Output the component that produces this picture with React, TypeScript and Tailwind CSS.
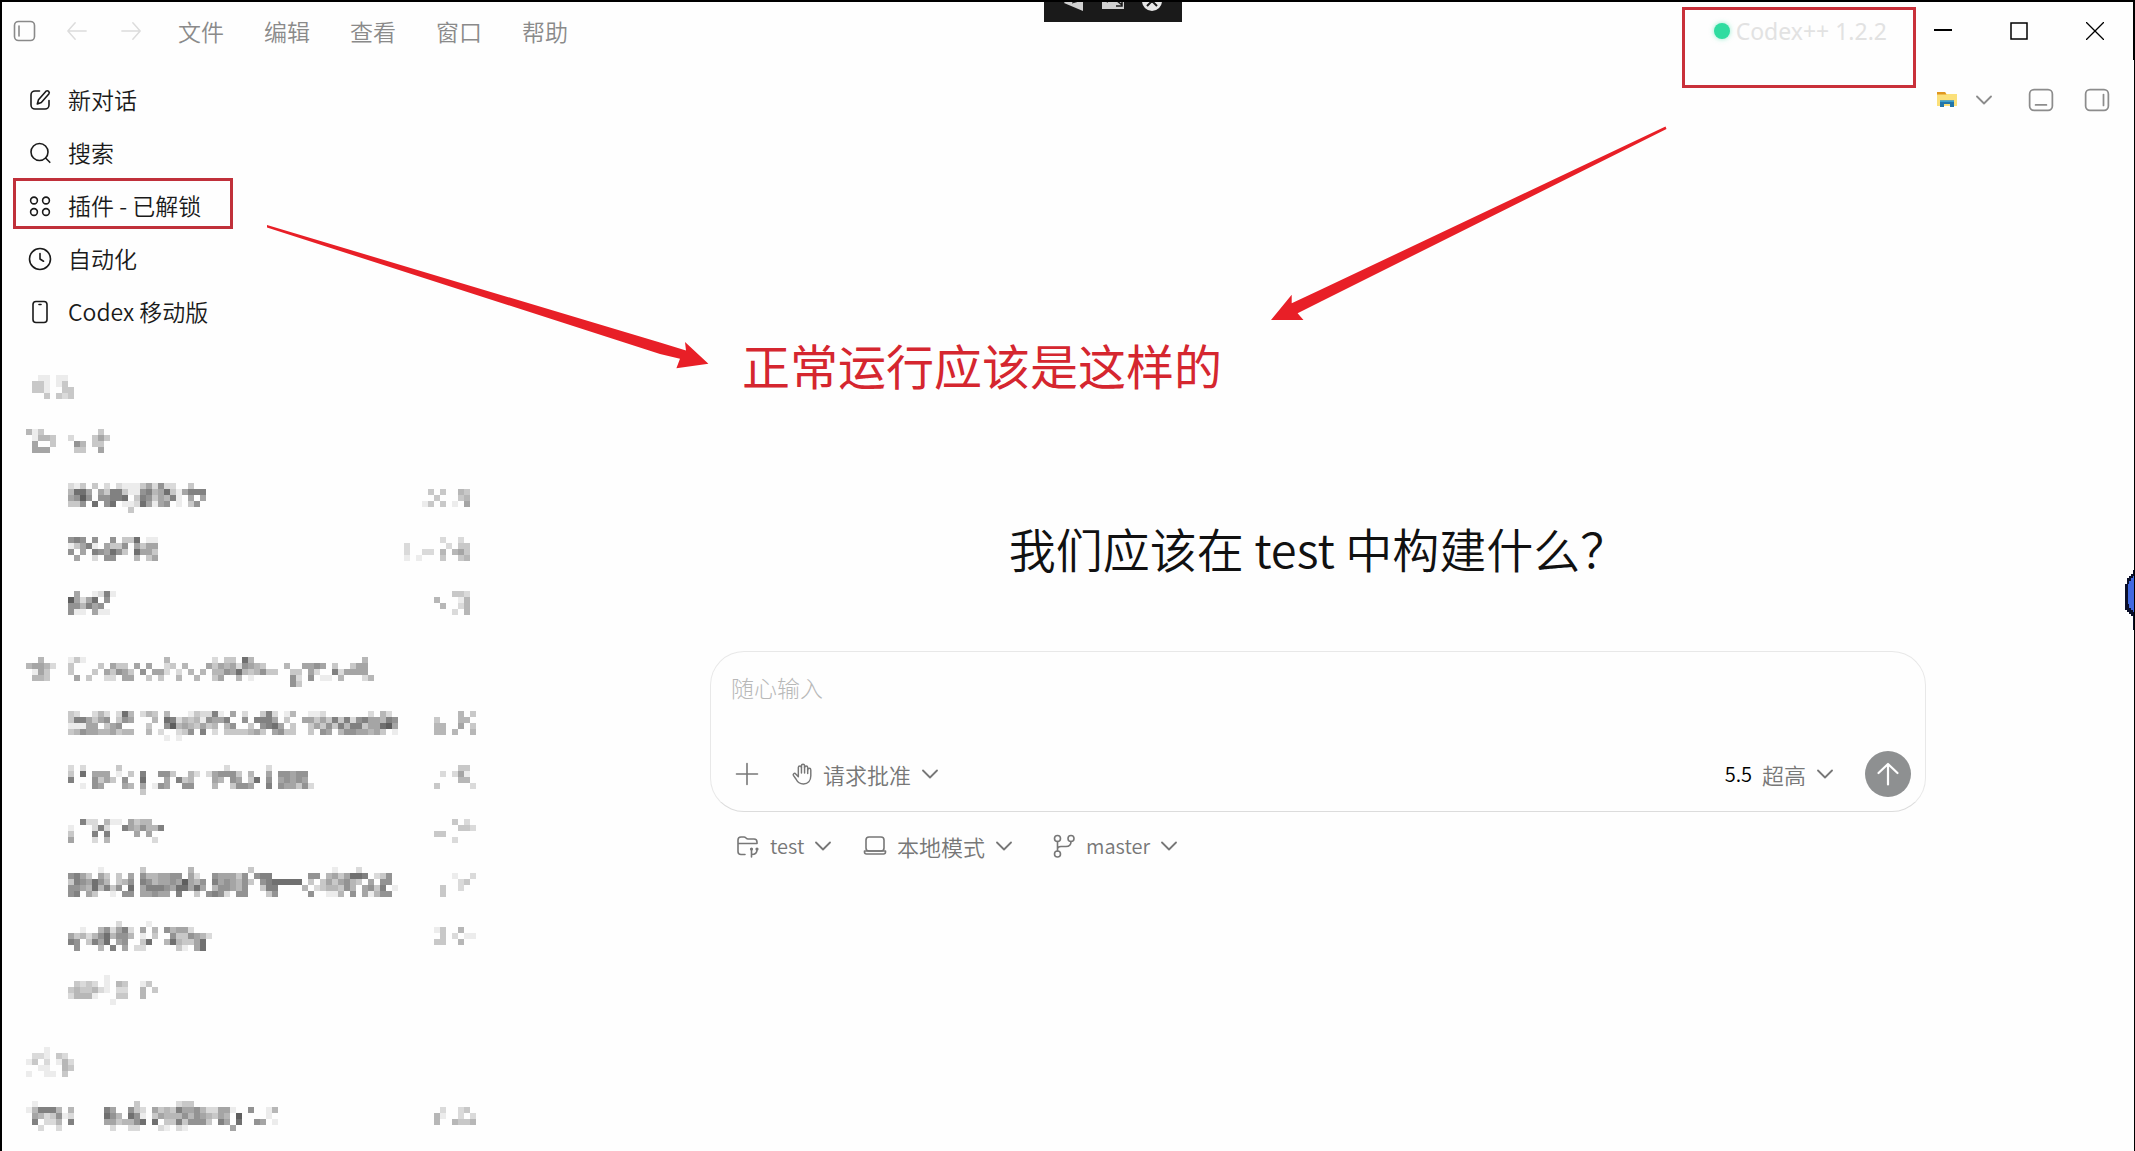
import React from 'react';

type Row = { label: string[]; time?: string[] };

const menus = ['文件', '编辑', '查看', '窗口', '帮助'];

// 모자이크 처리된 대화 목록: 한 글자 = 6px 블록, 숫자가 클수록 진함
const groups: Row[][] = [
    [
        { label: ['', '..11.11', '.331.13', '.331..33', '...3.323'] },
        { label: ['', '413.........3', '.1443..2...353', '.5..3...64.33', '.555....33..5'] },
        {
            label: ['', '.......213.3.2.2111352622..3', '.......4885.537731167458315777', '.......5696.66778.37635471.5.5', '.......336.8.68.11285156.1.36', '.................3'],
            time: ['', '', '....3.3..43', '.....3...34', '...13.3.1.5'],
        },
        {
            label: ['', '.......676.6..6.338.11', '.......13571.5336.5355', '.......6.5.765863.8553', '........5..2.66...4.35'],
            time: ['', '......2..2', '2......2.33', '2..22.4.453', '1.1...3..34'],
        },
        {
            label: ['', '........5..1271', '.......9525806', '.......6647560', '.......611.511'],
            time: ['', '........332', '.....4...14', '......4..24', '........2.4'],
        },
    ],
    [
        {
            label: [
                '',
                '..4....131.............4.......2.33.84..................4',
                '45542..3....3.533.5.5..23.4...5354526543...4..5565.3..355',
                '.153...3...3.53653.6.552.2.4.4.44658434633..33.52..725555',
                '.443....5.3..22.55..3.3..4..4..35..4.1......62.6.11.4...24',
                '............................................63',
            ],
        },
        {
            label: [
                '',
                '.......32..242.284.243.4...13227105.2..372.14..112.......2.42.',
                '.......3775356.365...4.87243416557..6.7775.3..5535373726755476',
                '.......11155.356....3..694543534046..3.6785.3..353637477355895',
                '.......34655445344..4.2..236.7.2.3333453.5633..3.65.46655453.1',
                '.......................1.1',
            ],
            time: ['', '.........4.3', '.....3...44', '.....44..5.3', '.....44.4..4'],
        },
        {
            label: [
                '',
                '.......2.2.....3.................2......2',
                '.......3.8.555.1.3.7..663..42.256663.4..5.66566',
                '.......7...6353.6..8...5.734...54.65.38.6.56565',
                '.........1.65...54.5.165..66...4..3665..7.655362',
                '...................3',
            ],
            time: ['', '.........33', '......2.251', '.........44', '.....3.....2'],
        },
        {
            label: ['', '.........722.411.5344', '.......1...272..7546447', '.......3...7.7....5.5', '.......5...2.4.......2'],
            time: ['', '........3.2', '.........332', '.....33', '........2'],
        },
        {
            label: [
                '............1......3.......4.........3.............1...2',
                '.......6753.53.3.5.6445566.52..655536.677......66.4535887.236',
                '.......3765864.346.76455659546.7565463.6788888.3.3535643.5.66',
                '.......665484736.8.57776588585.466546..377....4.2344364.5637.1',
                '.......67.53..1.66.55655.7..3.6762.66...36.....6..114.6.51466',
            ],
            time: ['', '........1..2', '.........23', '......3..2', '......3'],
        },
        {
            label: ['...............2....1', '.........1..462572.5.4.64552', '.......53424684664.1.3..6336542', '.......76.3758.56..38..4843358', '........6...4.7.5.22.....31.58'],
            time: ['', '.....13..4', '......3.2.11', '.....33..4'],
        },
        {
            label: ['.............1', '........3232.1.43..13', '.......3433421.22..4.3', '.......24441...33..4', '..............1'],
        },
    ],
    [
        { label: ['...1', '.221.32', '13.2.142', '..11..43', '1..11.3'] },
        {
            label: ['.1................3......233', '147774.4.....75..632.53437556422551..6..14', '.5423612.....864.861.3544464654354.9....1', '.7.224.7.....5534468.8.33736663.75.8..65.1', '..2..2........2..22...21.21.......5'],
            time: ['', '......2..23', '.....41..2.2', '.....4..4334'],
        },
    ],
];

function Mosaic({ rows, cols }: { rows: string[]; cols: number }) {
    return (
        <svg width={cols * 6} height="36" shapeRendering="crispEdges" aria-hidden="true" className="shrink-0">
            {rows.map((row, y) =>
                row.split('').map((c, x) =>
                    Number(c) > 0 ? (
                        <rect key={`${x}-${y}`} x={x * 6} y={y * 6} width="6" height="6" fill="#000" fillOpacity={Number(c) * 0.07} />
                    ) : null
                )
            )}
        </svg>
    );
}

function Icon({ children, className = 'w-6 h-6', width = 1.6 }: { children: React.ReactNode; className?: string; width?: number }) {
    return (
        <svg viewBox="0 0 24 24" fill="none" stroke="currentColor" strokeWidth={width} strokeLinecap="round" strokeLinejoin="round" aria-hidden="true" className={`shrink-0 ${className}`}>
            {children}
        </svg>
    );
}

function Chevron() {
    return (
        <svg viewBox="0 0 16 16" fill="none" stroke="currentColor" strokeWidth="1.8" strokeLinecap="round" strokeLinejoin="round" aria-hidden="true" className="w-4 h-4 shrink-0 pointer-events-none">
            <path d="m1 4.5 7 7 7-7" />
        </svg>
    );
}

function Picker({ label, value, icon, className = 'text-[22px]' }: { label: string; value: string; icon?: React.ReactNode; className?: string }) {
    return (
        <div className="flex items-center gap-2.5">
            {icon}
            <select aria-label={label} className={`appearance-none bg-transparent outline-none cursor-pointer ${className}`}>
                <option>{value}</option>
            </select>
            <Chevron />
        </div>
    );
}

const nav = [
    {
        name: '新对话',
        icon: (
            <Icon>
                <path d="M11.5 3H7a4 4 0 0 0-4 4v10a4 4 0 0 0 4 4h10a4 4 0 0 0 4-4v-4.5" />
                <path d="M18 3.2a2 2 0 0 1 2.8 2.8l-7.5 8.5-4 1.5 1.2-4.2z" />
            </Icon>
        ),
    },
    {
        name: '搜索',
        icon: (
            <Icon>
                <circle cx="11.5" cy="11" r="8.5" />
                <path d="m17.8 17.3 4 4" />
            </Icon>
        ),
    },
    {
        name: '插件 - 已解锁',
        icon: (
            <Icon>
                <circle cx="6" cy="6.5" r="3.4" />
                <circle cx="18" cy="6.5" r="3.4" />
                <circle cx="6" cy="18" r="3.4" />
                <circle cx="18" cy="18" r="3.4" />
            </Icon>
        ),
    },
    {
        name: '自动化',
        icon: (
            <Icon>
                <circle cx="12" cy="12" r="10.5" />
                <path d="M12 6.5V12l3.5 2.2" />
            </Icon>
        ),
    },
    {
        name: 'Codex 移动版',
        icon: (
            <Icon>
                <rect x="5" y="1.5" width="14" height="21" rx="3" />
                <path d="M11 4.5h2" />
            </Icon>
        ),
    },
];

function TitleBar() {
    return (
        <header className="flex items-center h-[58px] pl-2.5 border-r border-black text-[#8a8a8a]">
            <button aria-label="切换边栏">
                <Icon>
                    <rect x="2.5" y="2.5" width="20" height="19" rx="4" />
                    <path d="M7 7v10" />
                </Icon>
            </button>
            <button aria-label="后退" className="ml-[30px] text-[#dcdcdc]">
                <Icon className="w-[22px] h-[22px]"><path d="M22 12H2m8-9-8 9 8 9" /></Icon>
            </button>
            <button aria-label="前进" className="ml-8 text-[#dcdcdc]">
                <Icon className="w-[22px] h-[22px]"><path d="M2 12h20m-8-9 8 9-8 9" /></Icon>
            </button>
            <nav className="flex gap-10 ml-9">
                {menus.map((m) => (
                    <button key={m}>{m}</button>
                ))}
            </nav>

            <div className="relative flex items-center gap-1.5 ml-auto mr-[18px] font-['Noto_Sans','Noto_Sans_CJK_SC',sans-serif] text-[#e2e2e2]">
                <span className="w-4 h-4 rounded-full bg-[#2fdca0] shadow-[0_0_5px_#2fdca088]"></span>
                <span className="font-normal">Codex++ 1.2.2</span>
                <div className="absolute -top-1.5 -left-8 -right-[29px] h-[81px] border-3 border-[#c9303a] pointer-events-none"></div>
            </div>
            <div className="flex text-black">
                <button aria-label="最小化" className="w-[76px] flex justify-center">
                    <svg width="18" height="18" stroke="currentColor" strokeWidth="2"><path d="M0 8h18" /></svg>
                </button>
                <button aria-label="最大化" className="w-[76px] flex justify-center">
                    <svg width="18" height="18" fill="none" stroke="currentColor" strokeWidth="1.5"><rect x="1" y="1" width="16" height="16" /></svg>
                </button>
                <button aria-label="关闭" className="w-[76px] flex justify-center">
                    <svg width="18" height="18" stroke="currentColor" strokeWidth="1.3"><path d="m0 0 18 18M18 0 0 18" /></svg>
                </button>
            </div>
        </header>
    );
}

function Sidebar() {
    return (
        <aside className="w-[500px] shrink-0 pt-[13px]">
            <nav>
                {nav.map((item, i) => (
                    <div key={item.name} className="relative h-[53px] flex items-center">
                        <button className="flex items-center gap-4 pl-[26px] text-[#1a1a1a]">
                            {item.icon}
                            <span className="pb-0.5">{item.name}</span>
                        </button>
                        {i === 2 && <div className="absolute left-[11px] -top-px w-[220px] h-[51px] border-3 border-[#c0303a] pointer-events-none"></div>}
                    </div>
                ))}
            </nav>
            <div className="pl-6 pr-[26px] mt-[31px]">
                {groups.map((rows, g) => (
                    <ul key={g} className={g === 0 ? '' : g === 1 ? 'mt-3' : 'mt-[18px]'}>
                        {rows.map((row, i) => (
                            <li key={i} className={g === 2 && i === 1 ? 'flex justify-between' : 'h-[54px] flex justify-between items-start'}>
                                <Mosaic rows={row.label} cols={63} />
                                {row.time && <Mosaic rows={row.time} cols={12} />}
                            </li>
                        ))}
                    </ul>
                ))}
            </div>
        </aside>
    );
}

function Composer() {
    return (
        <div className="w-full max-w-[1216px] mx-auto">
            <form className="border border-[#e8e8e8] border-b-[#dcdcdc] rounded-[34px] pt-[17px] pb-3.5 pl-5 pr-3.5">
                <textarea aria-label="随心输入" rows={1} placeholder="随心输入" className="block w-full h-[82px] leading-9 resize-none outline-none placeholder:text-[#b8b8b8] placeholder:font-light" />
                <div className="flex items-center text-[22px] text-[#777]">
                    <button type="button" aria-label="添加" className="ml-1">
                        <Icon><path d="M12 1.5v21M1.5 12h21" /></Icon>
                    </button>
                    <div className="ml-8">
                        <Picker
                            label="审批"
                            value="请求批准"
                            icon={
                                <Icon className="w-[22px] h-[22px]">
                                    <path d="M8 12V5a1.7 1.7 0 0 1 3.4 0V3a1.7 1.7 0 0 1 3.4 0v2a1.7 1.7 0 0 1 3.4 0v2.5a1.7 1.7 0 0 1 3.4 0V14c0 5.5-3.2 9-8 9-4 0-6.500-2-8.200-5.500L2.600 13.500c-.8-1.800 1.300-3 2.600-1.500L8 15z" />
                                    <path d="M11.4 5v6M14.8 4v7M18.2 7v4.5" />
                                </Icon>
                            }
                        />
                    </div>
                    <div className="flex items-center gap-2.5 ml-auto mr-8">
                        <span className="text-[20px] text-black">5.5</span>
                        <Picker label="模型" value="超高" />
                    </div>
                    <button type="submit" aria-label="发送" className="w-[46px] h-[46px] rounded-full bg-[#8e9091] text-white flex items-center justify-center">
                        <Icon width={2.2}><path d="M12 22.5V2M2.5 11 12 2l9.5 9" /></Icon>
                    </button>
                </div>
            </form>
            <div className="flex items-center gap-8 mt-4 pl-[26px] text-[#777]">
                <Picker
                    label="项目"
                    value="test"
                    className="text-[20px]"
                    icon={
                        <Icon>
                            <path d="M9 20.5H5a3 3 0 0 1-3-3V6a3 3 0 0 1 3-3h3c2 0 2 2 4 2h6a3 3 0 0 1 3 3v1.5M2 9.5h19" />
                            <path d="M15.5 23v-7M15.5 20.5c3 0 5.5-.5 5.5-4.5" />
                            <circle cx="15.5" cy="15" r=".8" />
                            <circle cx="21" cy="15" r=".8" />
                        </Icon>
                    }
                />
                <Picker
                    label="模式"
                    value="本地模式"
                    icon={
                        <Icon>
                            <rect x="3" y="3" width="18" height="14" rx="3" />
                            <path d="M1.5 17h21v1a2 2 0 0 1-2 2h-17a2 2 0 0 1-2-2z" />
                        </Icon>
                    }
                />
                <div className="ml-2">
                    <Picker
                        label="分支"
                        value="master"
                        className="text-[20px]"
                        icon={
                            <Icon>
                                <circle cx="5.5" cy="4.5" r="3" />
                                <circle cx="19" cy="4.5" r="3" />
                                <circle cx="5.5" cy="20" r="3" />
                                <path d="M5.5 7.5V17M19 7.5c0 4-2 5-5 5H9c-2 0-3.5 1-3.5 3" />
                            </Icon>
                        }
                    />
                </div>
            </div>
        </div>
    );
}

// 화면 위에 그린 빨간 화살표와 설명
function Annotations() {
    return (
        <div className="absolute -top-0.5 -left-0.5 pointer-events-none text-[#d5262f]">
            <svg width="1700" height="400" fill="#e81f27">
                <path d="M267 225 660 342.5l26 8-1-8.5 23.4 21.7-32 4.6 3.6-9.6L660 354 267 227.5z" />
                <path d="M1665.5 126.5 1320 290l-28.3 13.3v-8.6L1271 320h32.5l-5.9-6.7L1320 302l346.500-173z" />
            </svg>
            <p className="absolute top-[328px] left-[742px] text-[48px] leading-[72px] font-normal whitespace-nowrap">正常运行应该是这样的</p>
        </div>
    );
}

export default function App() {
    return (
        <div className="relative min-h-screen overflow-hidden bg-[#fefefe] border-t-2 border-l-2 border-r border-black text-[23px] leading-9 font-[350] font-['Noto_Sans_CJK_SC','Noto_Sans',sans-serif]">
            <TitleBar />
            <div className="flex">
                <Sidebar />
                <main className="flex-1 min-w-0">
                    <div className="flex items-center justify-end h-20 pr-6 text-[#8c8c8c]">
                        <button aria-label="打开文件夹" className="flex items-center gap-[18px]">
                            <svg viewBox="0 0 22 18" aria-hidden="true" className="w-[22px] h-[18px]">
                                <path d="M1 1h8l1.5 2H21v12H1z" fill="#fbe07a" />
                                <path d="M1 1h8l1.5 2.5H1z" fill="#e0971f" />
                                <path d="M4 9.5h14V16h-4v-3H8v3H4z" fill="#2476a8" />
                                <path d="M4 9.5h14V11H4z" fill="#3aa0d0" />
                            </svg>
                            <Chevron />
                        </button>
                        <button aria-label="底部面板" className="ml-9">
                            <Icon className="w-[26px] h-[26px]">
                                <rect x="1.5" y="2.5" width="21" height="19" rx="4" />
                                <path d="M7 16.5h10" />
                            </Icon>
                        </button>
                        <button aria-label="右侧面板" className="ml-[30px]">
                            <Icon className="w-[26px] h-[26px]">
                                <rect x="1.5" y="2.5" width="21" height="19" rx="4" />
                                <path d="M18 7v10" />
                            </Icon>
                        </button>
                    </div>
                    <h1 className="mt-[373px] mb-[68px] text-center text-[47px] leading-[70px] text-[#111]">我们应该在 test 中构建什么？</h1>
                    <Composer />
                </main>
            </div>

            {/* 상단 플로팅 툴바 */}
            <div className="absolute -top-0.5 left-[1042px] w-[138px] h-[22px] bg-[#1a1a1a]">
                <svg width="138" height="22" aria-hidden="true">
                    <path d="M20 3 39 11V0H22z" fill="#d0d0d0" />
                    <path d="M28 3l11-3" stroke="#1a1a1a" />
                    <path d="M58 0h22v9H58z" fill="#d0d0d0" />
                    <path d="M60 0l4 2M72 0l6 5m0-5v6h-6" stroke="#1a1a1a" strokeWidth="1.5" fill="none" />
                    <circle cx="108" cy="1" r="10" fill="#e6e6e6" />
                    <path d="m103 6 5-5 5 5M108 1V0" stroke="#1a1a1a" strokeWidth="2" fill="none" />
                </svg>
            </div>

            {/* 오른쪽 가장자리 위젯 */}
            <svg width="10" height="60" shapeRendering="crispEdges" aria-hidden="true" className="absolute top-[568px] -right-px">
                <path d="M8 0h2v60H8V46H6v-2H4v-2H2v-2H0V14h2V8h2V6h2V4h2z" fill="#0a0f2a" />
                <path d="M8 6h2v36H8v-2H6v-2H4v-4H3V14h1v-3h2V8h2z" fill="#4169e1" />
            </svg>

            <Annotations />
        </div>
    );
}
